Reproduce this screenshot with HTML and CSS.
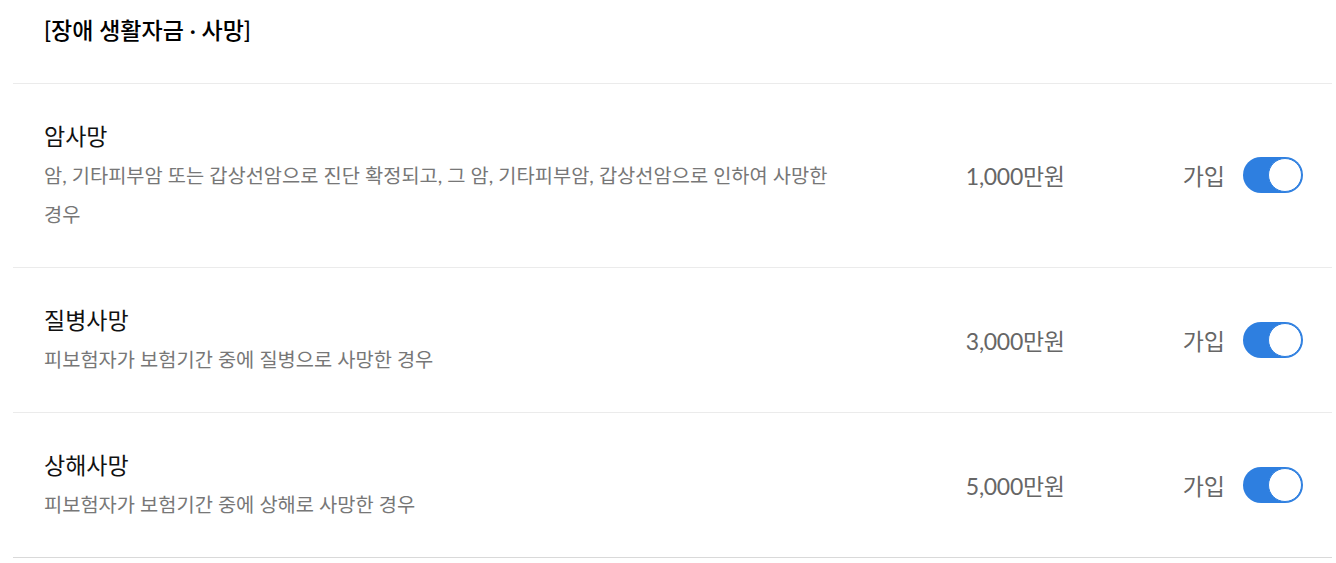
FILE: index.html
```html
<!DOCTYPE html>
<html lang="ko">
  <head>
    <meta charset="UTF-8" />
    <meta name="viewport" content="width=device-width, initial-scale=1.0" />
    <title>장애 생활자금 · 사망</title>
    <link rel="stylesheet" href="styles.css">
  </head>
  <body>
    <div class="container">
      <h2 class="section-title">[장애 생활자금 · 사망]</h2>

      <div class="coverage-row">
        <div class="info">
          <p class="name">암사망</p>
          <p class="desc">암, 기타피부암 또는 갑상선암으로 진단 확정되고, 그 암, 기타피부암, 갑상선암으로 인하여 사망한 경우</p>
        </div>
        <div class="amount">1,000만원</div>
        <label class="join">
          <span>가입</span>
          <input type="checkbox" checked />
          <span class="toggle"></span>
        </label>
      </div>

      <div class="coverage-row">
        <div class="info">
          <p class="name">질병사망</p>
          <p class="desc">피보험자가 보험기간 중에 질병으로 사망한 경우</p>
        </div>
        <div class="amount">3,000만원</div>
        <label class="join">
          <span>가입</span>
          <input type="checkbox" checked />
          <span class="toggle"></span>
        </label>
      </div>

      <div class="coverage-row last">
        <div class="info">
          <p class="name">상해사망</p>
          <p class="desc">피보험자가 보험기간 중에 상해로 사망한 경우</p>
        </div>
        <div class="amount">5,000만원</div>
        <label class="join">
          <span>가입</span>
          <input type="checkbox" checked />
          <span class="toggle"></span>
        </label>
      </div>
    </div>
  </body>
</html>
```

FILE: styles.css
```css
body {
  margin: 0;
  font-family: Lato, "Noto Sans CJK KR", sans-serif;
  background-color: #fff;
  color: #111;
}

.container {
  padding: 0 4px 0 13px;
}

.section-title {
  margin: 0;
  padding: 15px 31px 38px;
  font-size: 23px;
  line-height: 30px;
  font-weight: 500;
  color: #000;
  border-bottom: 1px solid #ebebeb;
}

.coverage-row {
  display: flex;
  align-items: center;
  padding: 37px 29px 33px 31px;
  border-bottom: 1px solid #ebebeb;
}

.coverage-row.last {
  border-bottom-color: #d9d9d9;
}

.info {
  width: 810px;
  flex: none;
}

.name {
  margin: 0 0 5px;
  font-size: 23px;
  line-height: 30px;
  color: #111;
}

.desc {
  margin: 0;
  font-size: 19.8px;
  line-height: 39px;
  color: #777;
  word-break: keep-all;
}

.amount {
  flex: 1;
  margin-bottom: 5px;
  text-align: right;
  font-size: 23px;
  color: #666;
  letter-spacing: -0.3px;
}

.join {
  display: flex;
  align-items: center;
  gap: 18px;
  margin-left: 118px;
  margin-bottom: 5px;
  font-size: 23px;
  color: #666;
  cursor: pointer;
}

.join input {
  display: none;
}

.toggle {
  position: relative;
  width: 60px;
  height: 36px;
  border-radius: 18px;
  background-color: #ccc;
}

.toggle::after {
  content: "";
  position: absolute;
  top: 1px;
  left: 1px;
  width: 32px;
  height: 32px;
  border-radius: 50%;
  background-color: #fff;
  border: 1px solid #2e7fe0;
}

.join input:checked + .toggle {
  background-color: #2e7fe0;
}

.join input:checked + .toggle::after {
  left: 25px;
}
```
